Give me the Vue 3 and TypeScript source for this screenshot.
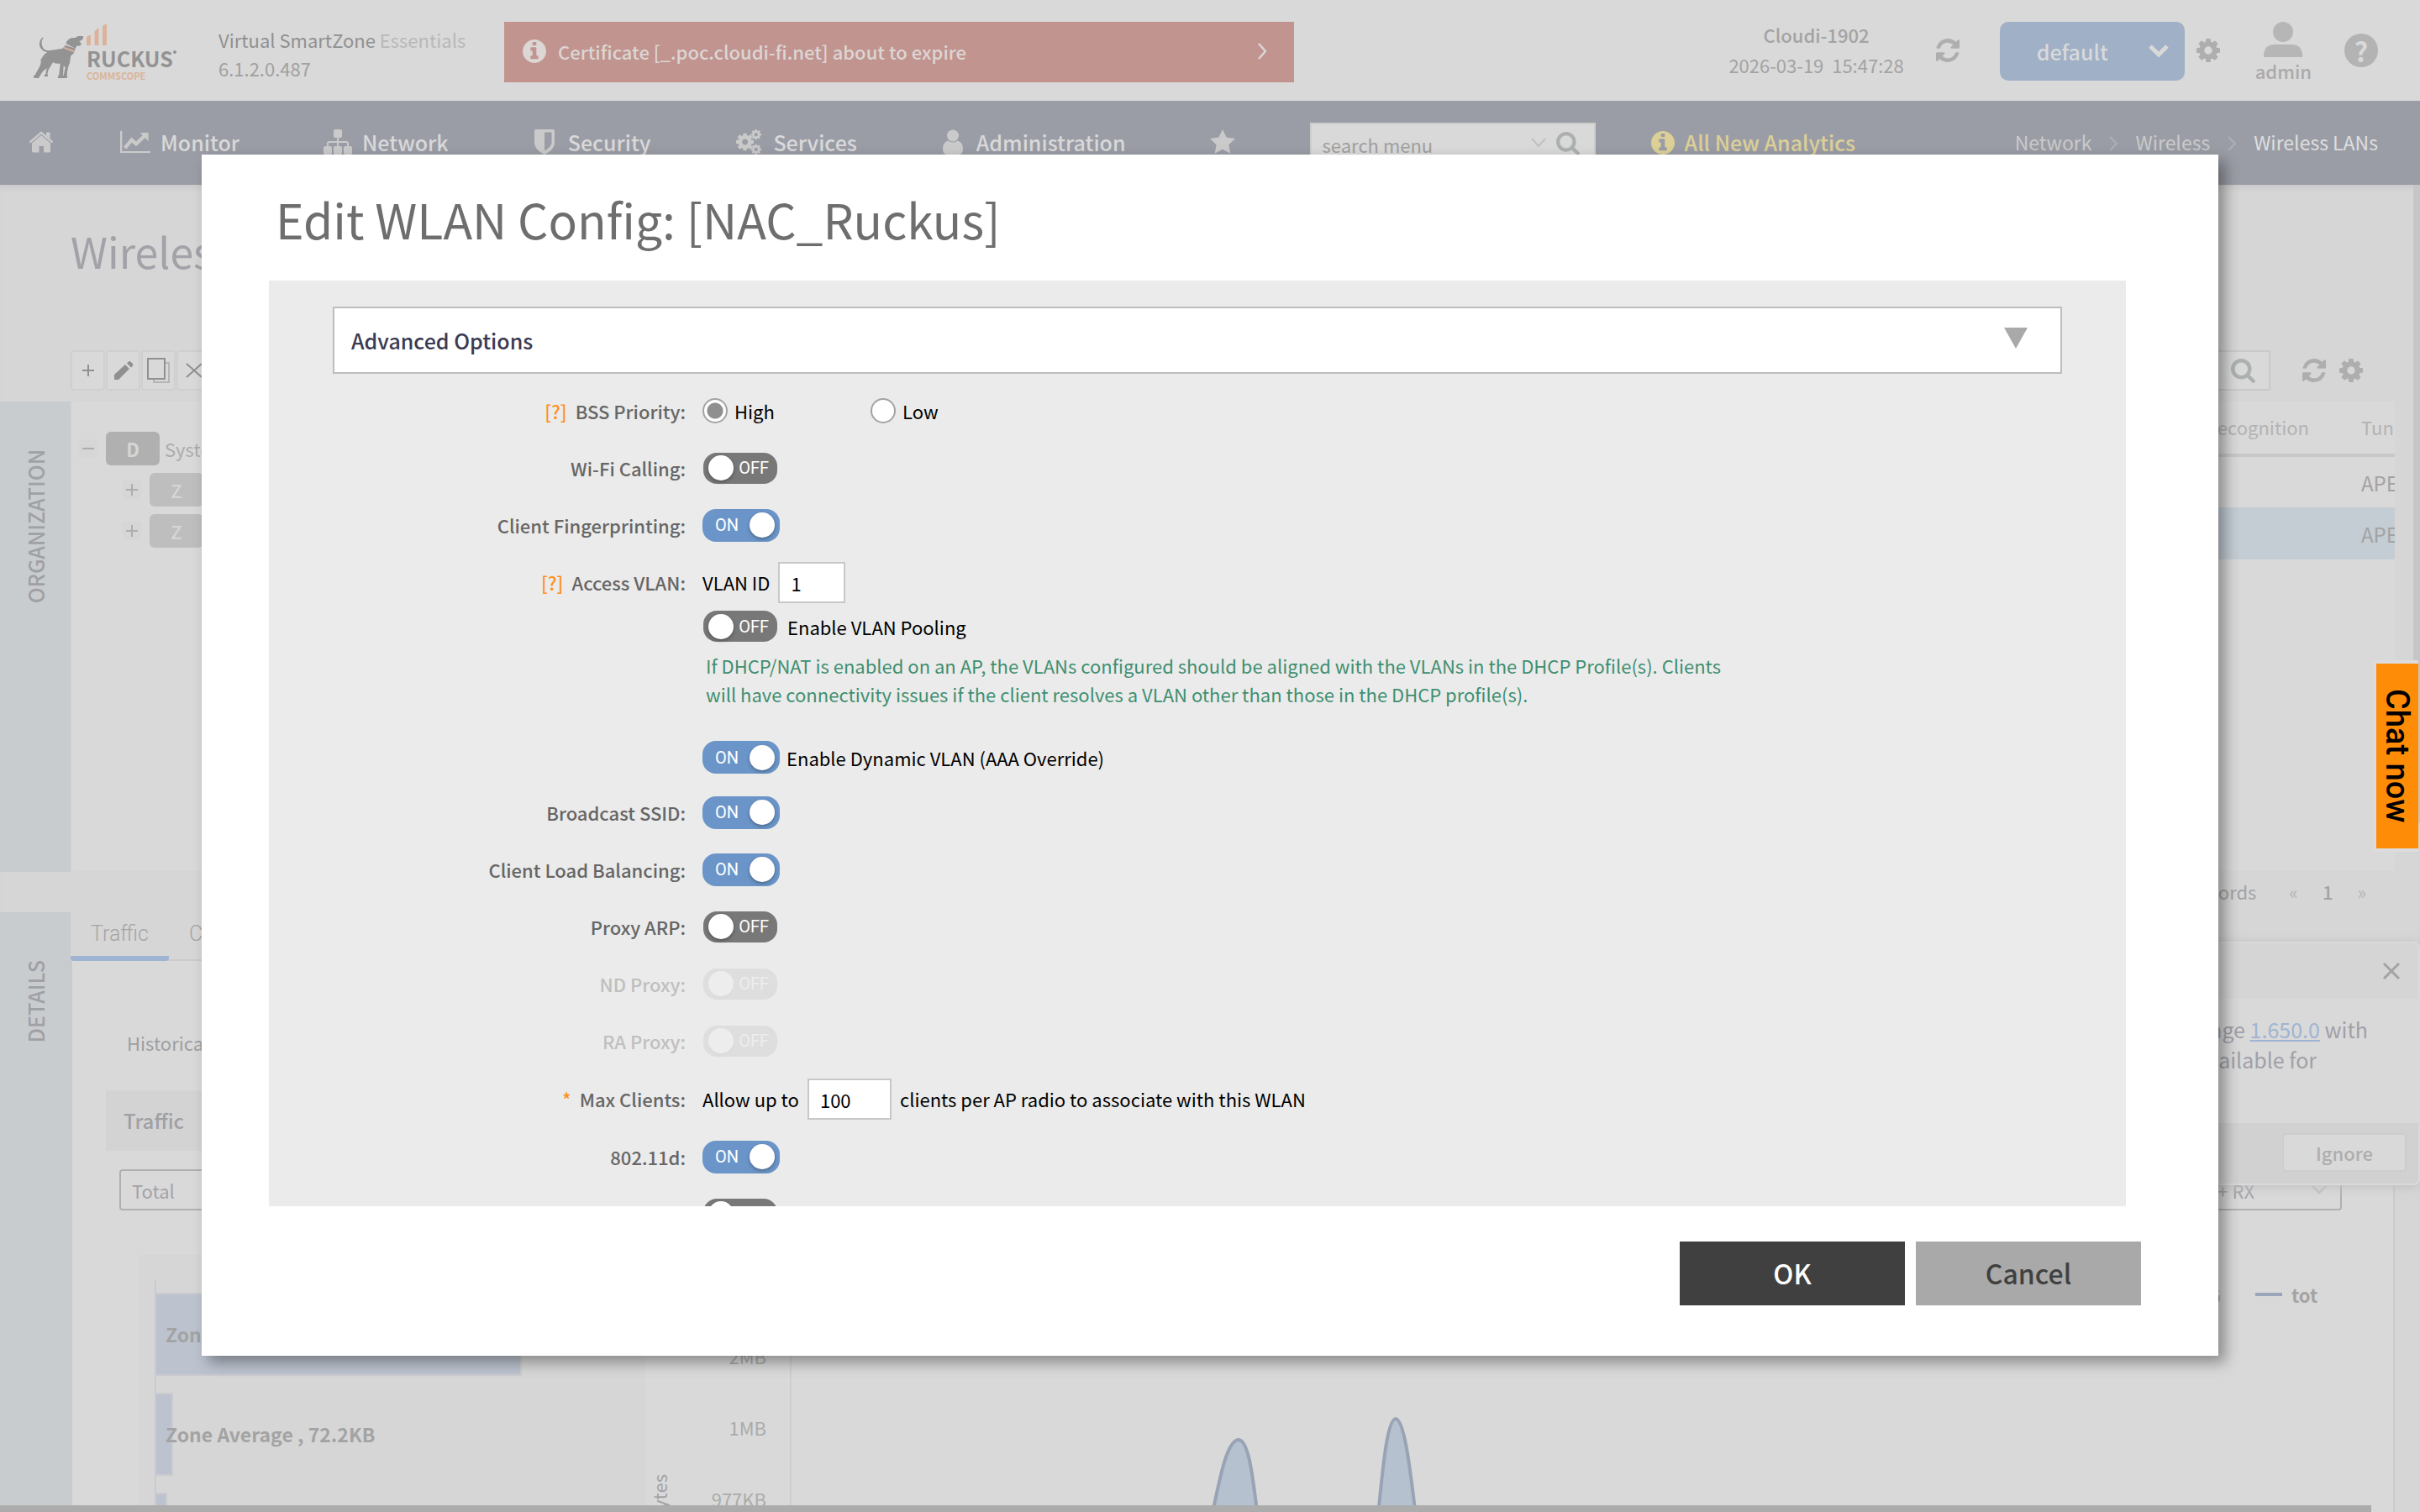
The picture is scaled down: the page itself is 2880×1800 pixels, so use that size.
<script setup lang="ts">
import { ref } from 'vue'

interface NavItem {
  label: string
  icon: string
  width: number
  box: string
}

const navItems: NavItem[] = [
  { label: 'Monitor', icon: 'i-chart', width: 36, box: '0 0 38 28' },
  { label: 'Network', icon: 'i-sitemap', width: 34, box: '0 0 34 30' },
  { label: 'Security', icon: 'i-shield', width: 30, box: '0 0 28 30' },
  { label: 'Services', icon: 'i-cogs', width: 34, box: '0 0 34 34' },
  { label: 'Administration', icon: 'i-person', width: 30, box: '0 0 28 30' },
]

const bssPriority = ref('high')
const vlanId = ref('1')
const maxClients = ref('100')

interface ToggleRow {
  id: string
  label: string
  on: boolean
  disabled?: boolean
}

const firstRows = ref<ToggleRow[]>([
  { id: 'wifi-calling', label: 'Wi-Fi Calling:', on: false },
  { id: 'fingerprint', label: 'Client Fingerprinting:', on: true },
])
const pooling = ref<ToggleRow>({ id: 'pooling', label: 'Enable VLAN Pooling', on: false })
const dynamicVlan = ref<ToggleRow>({ id: 'dynamic', label: 'Enable Dynamic VLAN (AAA Override)', on: true })
const middleRows = ref<ToggleRow[]>([
  { id: 'broadcast', label: 'Broadcast SSID:', on: true },
  { id: 'balancing', label: 'Client Load Balancing:', on: true },
  { id: 'proxy-arp', label: 'Proxy ARP:', on: false },
  { id: 'nd-proxy', label: 'ND Proxy:', on: false, disabled: true },
  { id: 'ra-proxy', label: 'RA Proxy:', on: false, disabled: true },
])
const lastRows = ref<ToggleRow[]>([
  { id: 'dot11d', label: '802.11d:', on: true },
  { id: 'dot11k', label: '', on: false },
])

const bars = [
  { label: 'Zone', width: 435 },
  { label: 'Zone Average , 72.2KB', width: 20 },
  { label: '', width: 12 },
]
const ticks = ['2MB', '1MB', '977KB']
</script>

<template>
  <div class="app">
    <svg class="defs" width="0" height="0" aria-hidden="true">
      <symbol id="i-info" viewBox="0 128 1536 1536"><path d="M1024 1376v-160q0-14-9-23t-23-9h-96v-512q0-14-9-23t-23-9h-320q-14 0-23 9t-9 23v160q0 14 9 23t23 9h96v320h-96q-14 0-23 9t-9 23v160q0 14 9 23t23 9h448q14 0 23-9t9-23zm-128-896v-160q0-14-9-23t-23-9h-192q-14 0-23 9t-9 23v160q0 14 9 23t23 9h192q14 0 23-9t9-23zm640 416q0 209-103 385.500t-279.500 279.500-385.500 103-385.500-103-279.500-279.500-103-385.500 103-385.500 279.500-279.500 385.500-103 385.500 103 279.500 279.500 103 385.500z" /></symbol>
      <symbol id="i-cog" viewBox="0 128 1536 1536"><path d="M1024 896q0-106-75-181t-181-75-181 75-75 181 75 181 181 75 181-75 75-181zm512-109v222q0 12-8 23t-20 13l-185 28q-19 54-39 91 35 50 107 138 10 12 10 25t-9 23q-27 37-99 108t-94 71q-12 0-26-9l-138-108q-44 23-91 38-16 136-29 186-7 28-36 28h-222q-14 0-24.500-8.500t-11.500-21.500l-28-184q-49-16-90-37l-141 107q-10 9-25 9-14 0-25-11-126-114-165-168-7-10-7-23 0-12 8-23 15-21 51-66.500t54-70.500q-27-50-41-99l-183-27q-13-2-21-12.500t-8-23.500v-222q0-12 8-23t19-13l186-28q14-46 39-92-40-57-107-138-10-12-10-24 0-10 9-23 26-36 98.500-107.500t94.500-71.500q13 0 26 10l138 107q44-23 91-38 16-136 29-186 7-28 36-28h222q14 0 24.500 8.500t11.500 21.500l28 184q49 16 90 37l142-107q9-9 24-9 13 0 25 10 129 119 165 170 7 8 7 22 0 12-8 23-15 21-51 66.500t-54 70.500q26 50 41 98l183 28q13 2 21 12.500t8 23.500z" /></symbol>
      <symbol id="i-refresh" viewBox="0 128 1536 1536"><path d="M1511 1056q0 5-1 7-64 268-268 434.500t-478 166.500q-146 0-282.500-55t-243.500-157l-129 129q-19 19-45 19t-45-19-19-45v-448q0-26 19-45t45-19h448q26 0 45 19t19 45-19 45l-137 137q71 66 161 102t187 36q134 0 250-65t186-179q11-17 53-117 8-23 30-23h192q13 0 22.500 9.500t9.500 22.500zm25-800v448q0 26-19 45t-45 19h-448q-26 0-45-19t-19-45 19-45l138-138q-148-137-349-137-134 0-250 65t-186 179q-11 17-53 117-8 23-30 23h-199q-13 0-22.500-9.500t-9.500-22.500v-7q65-268 270-434.500t480-166.500q146 0 284 55.500t245 156.500l130-129q19-19 45-19t45 19 19 45z" /></symbol>
      <symbol id="i-search" viewBox="0 128 1664 1664"><path d="M1152 832q0-185-131.500-316.500t-316.500-131.500-316.500 131.500-131.500 316.500 131.500 316.500 316.500 131.500 316.500-131.500 131.500-316.500zm512 832q0 52-38 90t-90 38q-54 0-90-38l-343-342q-179 124-399 124-143 0-273.500-55.500t-225-150-150-225-55.500-273.500 55.500-273.500 150-225 225-150 273.500-55.500 273.500 55.500 225 150 150 225 55.500 273.500q0 220-124 399l343 343q37 37 37 90z" /></symbol>
      <symbol id="i-home" viewBox="0 0 30 26"><path d="M15 5 L26 14.500 V24 a1.500 1.500 0 0 1-1.500 1.500 H18 V18 H12.500 V25.500 H5.500 A1.500 1.500 0 0 1 4 24 V14.500 Z" /><path d="M1.500 13.500 L15 2 L28.500 13.500" fill="none" stroke="currentColor" stroke-width="2.600" /><path d="M21 1.500h4.500v8l-4.500-4z" /></symbol>
      <symbol id="i-chart" viewBox="0 0 38 28"><path d="M0 0h2.500v25.500H38V28H0z" /><path d="M6 21.500 L14.500 11.500 L20 16.500 L31 6" fill="none" stroke="currentColor" stroke-width="4.500" /><path d="M25 2.500h10.500V13z" /></symbol>
      <symbol id="i-sitemap" viewBox="0 0 34 30"><rect x="12" y="0" width="10" height="10" rx="2" /><rect x="0" y="20" width="10" height="10" rx="2" /><rect x="12" y="20" width="10" height="10" rx="2" /><rect x="24" y="20" width="10" height="10" rx="2" /><path d="M17 9v12M5 21v-4.500q0-1.500 1.500-1.500h21q1.500 0 1.500 1.500V21" fill="none" stroke="currentColor" stroke-width="2" /></symbol>
      <symbol id="i-shield" viewBox="0 0 28 30"><path fill-rule="evenodd" d="M3 0h20q2 0 2 2v14q0 8-12 14Q1 24 1 16V2q0-2 2-2zM13 3.500v22q8.500-5 8.500-10V3.500z" /></symbol>
      <symbol id="i-cogs" viewBox="0 0 34 34"><use href="#i-cog" x="0" y="5" width="24" height="24" /><use href="#i-cog" x="20" y="0" width="14" height="14" /><use href="#i-cog" x="20" y="20" width="14" height="14" /></symbol>
      <symbol id="i-person" viewBox="0 0 28 30"><circle cx="13" cy="7.500" r="7" /><path d="M7 13.500q6 4 12 0q6 2 6 10q0 6.500-5 6.500H6q-5 0-5-6.500q0-8 6-10z" /></symbol>
      <symbol id="i-star" viewBox="0 0 30 29"><path d="M15 0l4.600 9.600 10.400 1.400-7.600 7.300 1.900 10.500L15 23.700 5.700 28.800l1.900-10.500L0 11l10.400-1.400z" /></symbol>
    </svg>

    <header class="topbar">
      <div class="logo">
        <svg class="dog" viewBox="0 0 180 150" width="60" height="50" aria-hidden="true">
          <path fill="#939393" d="M2 147q0-6 6-8l14-26q10-14 6-28l12-18q6-6 12-9Q28 52 24 32q-2-16 12-28l2 2Q28 18 34 36q4 14 22 16l42-6q12-2 18-14l36 12q-2 16-16 26l-4 26q-8 16-10 44q4 6-2 10h-14q-2-6 4-10l6-28-6-6-2 34q2 8-3 10H90q-2-6 4-12l4-40q-16 2-26-4l-16 26-4 16q4 4 2 8H40q0-6 6-8l4-22-16 14-12 20q2 4 0 8z" />
          <path fill="#939393" d="M120 28q-2-8 4-12q8-12 28-10q8-6 18-8l8 0q6 2 2 10q-4 8-14 10q6 4 8 12q-8 8-16 4l-6 10z" />
          <path fill="#dcb39a" d="M110 38l40 14-2 6-42-16z" />
        </svg>
        <div class="brand">
          <svg viewBox="0 0 24 26" width="24" height="26" aria-hidden="true"><path fill="#dcb39a" d="M0 16l5-3v13H0zM9.500 9l5-4v21h-5zM19 3l5-3v26h-5z" /></svg>
          <strong>RUCKUS<i></i></strong>
          <small>COMMSCOPE</small>
        </div>
      </div>
      <div class="product">
        <div>Virtual SmartZone <span>Essentials</span></div>
        <div class="version">6.1.2.0.487</div>
      </div>
      <div class="alert">
        <svg class="ic28"><use href="#i-info" /></svg>
        <span>Certificate [_.poc.cloudi-fi.net] about to expire</span>
        <svg class="alert-more" viewBox="0 0 12 20" width="12" height="20"><path d="M2 1l8 9-8 9" fill="none" stroke="currentColor" stroke-width="2.500" /></svg>
      </div>
      <div class="cluster">
        <div class="name">Cloudi-1902</div>
        <div>2026-03-19&nbsp; 15:47:28</div>
      </div>
      <button class="bare refresh" aria-label="Refresh"><svg class="ic28"><use href="#i-refresh" /></svg></button>
      <button class="domain">
        default
        <svg viewBox="0 0 26 18" width="26" height="18"><path d="M3 3l10 10L23 3" fill="none" stroke="currentColor" stroke-width="5" /></svg>
      </button>
      <button class="bare gear" aria-label="Settings"><svg class="ic28"><use href="#i-cog" /></svg></button>
      <div class="user">
        <svg viewBox="0 0 46 42" width="46" height="42"><circle cx="23" cy="12" r="12" fill="#b6b6b6" /><path d="M0 42V38Q2 27 12 27h22q10 0 12 11v4z" fill="#b6b6b6" /></svg>
        <span>admin</span>
      </div>
      <button class="bare help" aria-label="Help"><span>?</span></button>
    </header>

    <nav class="nav">
      <a href="#" class="home" aria-label="Home"><svg viewBox="0 0 30 26" width="30" height="26"><use href="#i-home" /></svg></a>
      <a v-for="item in navItems" :key="item.label" href="#" class="nav-item">
        <svg :viewBox="item.box" :width="item.width" height="30"><use :href="'#' + item.icon" /></svg>
        {{ item.label }}
      </a>
      <a href="#" class="star" aria-label="Favorites"><svg width="30" height="29"><use href="#i-star" /></svg></a>
      <div class="menu-search">
        <input type="text" placeholder="search menu" aria-label="search menu" />
        <svg viewBox="0 0 18 12" width="18" height="12"><path d="M1 1l8 9 8-9" fill="none" stroke="#c0c0c0" stroke-width="2" /></svg>
        <svg class="ic28 glass"><use href="#i-search" /></svg>
      </div>
      <a href="#" class="analytics"><svg class="ic28"><use href="#i-info" /></svg>All New Analytics</a>
      <div class="crumbs">
        <a href="#">Network</a>
        <svg viewBox="0 0 12 20" width="12" height="20"><path d="M2 2l8 8-8 8" fill="none" stroke="#adafb6" stroke-width="2" /></svg>
        <a href="#">Wireless</a>
        <svg viewBox="0 0 12 20" width="12" height="20"><path d="M2 2l8 8-8 8" fill="none" stroke="#adafb6" stroke-width="2" /></svg>
        <span>Wireless LANs</span>
      </div>
    </nav>

    <main class="page">
      <h1>Wireless</h1>
      <div class="toolbar">
        <button aria-label="Add"><svg viewBox="0 0 16 16" width="16" height="16"><path d="M8 1v14M1 8h14" stroke="currentColor" stroke-width="2" /></svg></button>
        <button aria-label="Edit"><svg viewBox="0 0 24 24" width="24" height="24"><path d="M1 23v-6L14 5l5 5L6 23zM16 3.500l2-2q1.500-1 3 .5l1.500 1.500q1.500 1.500.5 3l-2 2z" fill="currentColor" /></svg></button>
        <button aria-label="Clone"><svg viewBox="0 0 28 30" width="28" height="30"><path d="M8 26v3h18V6h-4" fill="none" stroke="#b5b5b5" stroke-width="2" /><path d="M1 1h20v24H1z" fill="none" stroke="currentColor" stroke-width="2" /></svg></button>
        <button aria-label="Delete"><svg viewBox="0 0 20 20" width="20" height="20"><path d="M1 2l18 16M19 2L1 18" stroke="currentColor" stroke-width="2" /></svg></button>
        <div class="toolbar-right">
          <div class="table-search"><input type="text" aria-label="search table" /><svg width="29" height="29" class="glass"><use href="#i-search" /></svg></div>
          <button class="bare" aria-label="Reload table"><svg class="ic28"><use href="#i-refresh" /></svg></button>
          <button class="bare" aria-label="Table settings"><svg class="ic28"><use href="#i-cog" /></svg></button>
        </div>
      </div>

      <section class="org">
        <div class="side"><span>ORGANIZATION</span></div>
        <div class="tree">
          <div class="node">
            <button class="expander" aria-label="Collapse"><svg viewBox="0 0 16 16" width="16" height="16"><path d="M1 8h14" stroke="currentColor" stroke-width="2" /></svg></button>
            <b class="pill dark">D</b>System
          </div>
          <div v-for="n in 2" :key="n" class="node child">
            <button class="expander" aria-label="Expand"><svg viewBox="0 0 16 16" width="16" height="16"><path d="M8 1v14M1 8h14" stroke="currentColor" stroke-width="2" /></svg></button>
            <b class="pill">Z</b>
          </div>
        </div>
        <div class="wlans">
          <table>
            <thead>
              <tr><th class="recog">Application Recognition</th><th class="tun">Tun</th></tr>
            </thead>
            <tbody>
              <tr><td></td><td class="tun">APE</td></tr>
              <tr class="selected"><td></td><td class="tun">APE</td></tr>
            </tbody>
          </table>
        </div>
      </section>
      <div class="pager">
        <span>2 records</span>
        <button class="bare" aria-label="Previous">«</button>
        <b>1</b>
        <button class="bare" aria-label="Next">»</button>
      </div>

      <section class="details">
        <div class="side"><span>DETAILS</span></div>
        <div class="detail-body">
          <div class="tabs">
            <button class="tab active">Traffic</button>
            <button class="tab">Configuration</button>
          </div>
          <div class="panel">
            <p class="historical">Historical Data</p>
            <h2>Traffic</h2>
            <div class="selects">
              <label class="select wide"><select aria-label="Metric"><option>Total</option></select></label>
              <label class="select"><select class="right" aria-label="Direction"><option>TX + RX</option></select>
                <svg viewBox="0 0 18 12" width="18" height="12"><path d="M1 1l8 8 8-8" fill="none" stroke="#c0c0c0" stroke-width="2" /></svg>
              </label>
            </div>
            <div class="charts">
              <div class="bars">
                <div class="bars-inner">
                  <div v-for="bar in bars" :key="bar.label" class="bar-row">
                    <div class="bar" :style="{ width: bar.width + 'px' }"><span>{{ bar.label }}</span></div>
                  </div>
                </div>
              </div>
              <div class="axis-name"><span>Bytes</span></div>
              <div class="ticks"><span v-for="t in ticks" :key="t">{{ t }}</span></div>
              <div class="plot">
                <svg viewBox="0 0 900 320" width="900" height="320" aria-hidden="true">
                  <g fill="#b5c1cf" stroke="#98a3b5" stroke-width="4">
                    <path d="M498 320C508 278 516 221 532 220C546 221 550 278 556 320" />
                    <path d="M697 320C703 262 708 196 719 195C730 196 737 262 744 320" />
                  </g>
                </svg>
                <div class="legend"><span class="legend-name">5G</span><i></i><span class="legend-total">total</span></div>
              </div>
            </div>
          </div>
        </div>
      </section>
      <div class="vscroll"></div>
      <div class="hscroll"></div>

      <aside class="popup">
        <div class="popup-head"><button class="bare" aria-label="Close"><svg viewBox="0 0 20 20" width="20" height="20"><path d="M1 1l18 18M19 1L1 19" stroke="currentColor" stroke-width="3" /></svg></button></div>
        <div class="popup-body">
          <div>Signature package <a href="#">1.650.0</a> with</div>
          <div class="second">is available for</div>
        </div>
        <div class="popup-foot"><button>Ignore</button></div>
      </aside>
    </main>

    <button class="chat">Chat now</button>

    <div class="overlay">
      <form class="modal" role="dialog" aria-labelledby="modal-title" @submit.prevent>
        <h2 id="modal-title">Edit WLAN Config: [NAC_Ruckus]</h2>
        <div class="scroll">
          <button type="button" class="section-head">
            Advanced Options
            <svg viewBox="0 0 28 25" width="28" height="25"><path d="M0 0h28L14 25z" fill="#a9a9a9" /></svg>
          </button>

          <div class="row">
            <span class="label"><i>[?]</i>BSS Priority:</span>
            <div class="field">
              <label class="radio"><input v-model="bssPriority" type="radio" name="bss" value="high" />High</label>
              <label class="radio"><input v-model="bssPriority" type="radio" name="bss" value="low" />Low</label>
            </div>
          </div>

          <div v-for="r in firstRows" :key="r.id" class="row">
            <label class="label" :for="r.id">{{ r.label }}</label>
            <div class="field">
              <span class="switch" :class="{ on: r.on }"><input :id="r.id" v-model="r.on" type="checkbox" /><span>{{ r.on ? 'ON' : 'OFF' }}</span><i></i></span>
            </div>
          </div>

          <div class="row">
            <span class="label"><i>[?]</i>Access VLAN:</span>
            <div class="field">
              <label for="vlan">VLAN ID</label>
              <input id="vlan" v-model="vlanId" type="text" class="text short" />
            </div>
          </div>
          <div class="sub">
            <div class="field">
              <span class="switch" :class="{ on: pooling.on }"><input :id="pooling.id" v-model="pooling.on" type="checkbox" /><span>{{ pooling.on ? 'ON' : 'OFF' }}</span><i></i></span>
              <label class="after" :for="pooling.id">{{ pooling.label }}</label>
            </div>
            <p class="note">If DHCP/NAT is enabled on an AP, the VLANs configured should be aligned with the VLANs in the DHCP Profile(s). Clients<br />will have connectivity issues if the client resolves a VLAN other than those in the DHCP profile(s).</p>
            <div class="field">
              <span class="switch" :class="{ on: dynamicVlan.on }"><input :id="dynamicVlan.id" v-model="dynamicVlan.on" type="checkbox" /><span>{{ dynamicVlan.on ? 'ON' : 'OFF' }}</span><i></i></span>
              <label class="after" :for="dynamicVlan.id">{{ dynamicVlan.label }}</label>
            </div>
          </div>

          <div v-for="r in middleRows" :key="r.id" class="row" :class="{ disabled: r.disabled }">
            <label class="label" :for="r.id">{{ r.label }}</label>
            <div class="field">
              <span class="switch" :class="{ on: r.on }"><input :id="r.id" v-model="r.on" type="checkbox" :disabled="r.disabled" /><span>{{ r.on ? 'ON' : 'OFF' }}</span><i></i></span>
            </div>
          </div>

          <div class="row tall">
            <label class="label" for="max"><i>*</i>Max Clients:</label>
            <div class="field">
              <span>Allow up to</span>
              <input id="max" v-model="maxClients" type="text" class="text" />
              <span>clients per AP radio to associate with this WLAN</span>
            </div>
          </div>

          <div v-for="r in lastRows" :key="r.id" class="row">
            <label class="label" :for="r.id">{{ r.label }}</label>
            <div class="field">
              <span class="switch" :class="{ on: r.on }"><input :id="r.id" v-model="r.on" type="checkbox" /><span>{{ r.on ? 'ON' : 'OFF' }}</span><i></i></span>
            </div>
          </div>
        </div>
        <div class="actions">
          <button type="submit" class="ok">OK</button>
          <button type="button" class="cancel">Cancel</button>
        </div>
      </form>
    </div>
  </div>
</template>

<style>
body {
  margin: 0;
  overflow: hidden;
}
</style>

<style scoped>
.app {
  position: relative;
  display: flex;
  flex-direction: column;
  height: 100vh;
  overflow: hidden;
  background: #d6d6d6;
  color: #a3a3a3;
  font-family: "Noto Sans CJK SC", "Noto Sans", sans-serif;
  font-size: 22px;
  line-height: 32px;
}
.app * {
  box-sizing: border-box;
}
.defs {
  position: absolute;
}
svg {
  display: block;
  flex: none;
  fill: currentColor;
}
button,
input,
select {
  margin: 0;
  font: inherit;
  color: inherit;
}
button {
  display: flex;
  align-items: center;
  justify-content: center;
  padding: 0;
  cursor: pointer;
}
a {
  color: inherit;
  text-decoration: none;
}
.bare {
  border: 0;
  background: none;
}
.ic28 {
  width: 28px;
  height: 28px;
}

/* top bar */
.topbar {
  display: flex;
  flex: none;
  height: 120px;
  padding: 26px 50px 0 39px;
  background: #d9d9d9;
  white-space: nowrap;
}
.logo {
  display: flex;
  align-items: flex-start;
  width: 221px;
}
.dog {
  margin: 17px 4px 0 0;
}
.brand {
  padding-top: 2px;
  color: #939393;
}
.brand strong {
  display: block;
  font-size: 25px;
  line-height: 30px;
}
.brand strong i {
  display: inline-block;
  width: 4px;
  height: 4px;
  border-radius: 2px;
  background: #939393;
  vertical-align: 16px;
}
.brand small {
  display: block;
  font-size: 11px;
  font-weight: 700;
  line-height: 12px;
  color: #dcb39a;
}
.product {
  width: 340px;
  padding-top: 4px;
  color: #909090;
  line-height: 34px;
}
.product span {
  color: #b8b8b8;
}
.product .version {
  color: #a0a0a0;
}
.alert {
  display: flex;
  flex: none;
  align-items: center;
  gap: 14px;
  width: 940px;
  height: 72px;
  padding: 0 32px 2px 22px;
  background: #c1948f;
  color: #dcd6d5;
  font-weight: 500;
}
.alert-more {
  margin-left: auto;
}
.cluster {
  margin-top: -3px;
  margin-left: auto;
  text-align: center;
  line-height: 36px;
}
.cluster .name {
  font-weight: 500;
}
.refresh {
  height: 67px;
  margin-left: 38px;
  color: #aeaeae;
}
.domain {
  width: 220px;
  height: 70px;
  margin-left: 48px;
  padding: 0 18px 0 44px;
  justify-content: space-between;
  border: 0;
  border-radius: 10px;
  background: #9fb0c7;
  color: #d9d9d9;
  font-size: 25px;
  font-weight: 500;
}
.gear {
  height: 67px;
  margin-left: 14px;
  color: #aeaeae;
}
.user {
  display: flex;
  flex-direction: column;
  align-items: center;
  margin-left: 42px;
  font-weight: 500;
  color: #aaa;
}
.help {
  width: 40px;
  height: 40px;
  margin: 14px 0 0 39px;
  border-radius: 50%;
  background: #b3b3b3;
  color: #d9d9d9;
  font-size: 32px;
  font-weight: 700;
}

/* navigation */
.nav {
  display: flex;
  flex: none;
  align-items: flex-start;
  height: 100px;
  padding: 26px 50px 0 34px;
  background: #9b9da6;
  color: #cacaca;
  white-space: nowrap;
}
.nav svg {
  margin-top: 10px;
}
.home {
  margin-right: 79px;
}
.nav-item {
  display: flex;
  gap: 12px;
  margin-right: 100px;
  font-size: 25px;
  font-weight: 500;
  line-height: 46px;
  color: #d9d9d9;
}
.nav-item svg {
  margin-top: 4px;
  margin-top: 8px;
  color: #cacaca;
}
.star svg {
  margin-top: 8px;
}
.menu-search {
  display: flex;
  width: 340px;
  height: 50px;
  margin: 0 66px 0 89px;
  border: 2px solid #cdcdcd;
  background: #d9d9d9;
}
.menu-search input {
  width: 261px;
  padding: 1px 13px 0;
  border: 0;
  background: none;
}
.menu-search input::placeholder {
  color: #a0a0a0;
}
.menu-search svg {
  margin-top: 16px;
}
.menu-search svg.glass {
  margin: 9px 0 0 12px;
}
.glass {
  color: #acb0b0;
}
.analytics {
  display: flex;
  gap: 12px;
  font-size: 25px;
  font-weight: 500;
  line-height: 46px;
  color: #ddd097;
}
.crumbs {
  display: flex;
  gap: 20px;
  margin-left: auto;
  font-size: 23px;
  line-height: 46px;
}
.crumbs svg {
  margin-top: 15px;
}
.crumbs span {
  color: #dedede;
}

/* page */
.page {
  display: flex;
  flex: 1;
  flex-direction: column;
  min-height: 0;
  padding-top: 40px;
  box-shadow: inset 0 8px 8px -6px #c4c4c4;
}
h1 {
  margin: 0 0 81px 84px;
  font-size: 50px;
  font-weight: 400;
  line-height: 76px;
  color: #a2a2a8;
}
.toolbar {
  display: flex;
  flex: none;
  gap: 1px;
  height: 48px;
  margin: 0 68px 13px 84px;
  color: #909090;
}
.toolbar > button {
  width: 41px;
  border: 2px solid #cfcfcf;
  border-radius: 4px;
  background: #d9d9d9;
}
.toolbar-right {
  display: flex;
  align-items: center;
  margin-left: auto;
  color: #aeaeae;
}
.toolbar-right .bare {
  margin-left: 16px;
}
.table-search {
  display: flex;
  align-items: center;
  height: 48px;
  margin-right: 22px;
  padding-right: 16px;
  border: 2px solid #c9c9c9;
  background: #d9d9d9;
}
.table-search input {
  border: 0;
  background: none;
}
.side {
  flex: none;
  width: 84px;
  padding: 57px 26px 0 0;
  background: #c8cccf;
  color: #a0a0a5;
  font-size: 25px;
  font-weight: 500;
}
.side span {
  margin-left: 26px;
  writing-mode: vertical-rl;
  transform: rotate(180deg);
}
.org {
  display: flex;
  flex: none;
  height: 560px;
}
.tree {
  width: 30%;
  margin: 0 0 2px 2px;
  padding: 36px 8px;
  background: #d9d9d9;
}
.node {
  display: flex;
  align-items: center;
  height: 40px;
  margin-bottom: 9px;
  color: #adadad;
}
.node.child {
  padding-left: 52px;
}
.expander {
  width: 22px;
  height: 22px;
  margin-right: 10px;
  border: 0;
  background: #d6d6d6;
}
.pill {
  width: 64px;
  margin-right: 6px;
  border-radius: 6px;
  background: #bebebe;
  color: #d6d6d6;
  line-height: 40px;
  text-align: center;
  font-weight: 500;
}
.pill.dark {
  background: #b0b0b0;
  font-weight: 700;
}
.wlans {
  flex: 1;
  margin: 0 30px 2px 8px;
  background: #d9d9d9;
}
.wlans table {
  width: 100%;
  border-collapse: collapse;
  table-layout: fixed;
}
.wlans th {
  height: 64px;
  padding: 0 0 2px;
  border-bottom: 4px solid #c8c8c8;
  font-weight: 400;
  text-align: left;
  color: #b3b3b3;
}
.wlans td {
  height: 62px;
  padding: 2px 0 0;
  font-size: 24px;
}
.wlans .recog {
  padding-right: 62px;
  text-align: right;
}
.wlans .tun {
  width: 40px;
  overflow: hidden;
  white-space: nowrap;
}
.selected {
  background: #c4cdd4;
}
.pager {
  display: flex;
  flex: none;
  align-items: center;
  justify-content: flex-end;
  gap: 29px;
  height: 48px;
  padding: 0 64px 2px 0;
}
.pager span {
  margin-right: 10px;
}
.pager b {
  font-weight: 500;
}
.pager button {
  color: #b5b5b5;
}
.details {
  display: flex;
  flex: 1;
  min-height: 0;
}
.detail-body {
  flex: 1;
  margin-right: 30px;
}
.tabs {
  display: flex;
  height: 58px;
  border-bottom: 2px solid #cbcbcb;
}
.tab {
  height: 58px;
  padding: 0 24px;
  border: 0;
  border-bottom: 6px solid transparent;
  background: none;
  color: #a5a5a5;
  font-family: Roboto, sans-serif;
  font-weight: 300;
  font-size: 25px;
}
.tab.active {
  border-bottom-color: #9fb4d2;
  border-radius: 0 0 4px 4px;
}
.panel {
  height: 100%;
  padding: 81px 0 0 40px;
  border: solid #cacaca;
  border-width: 0 2px;
  background: #d9d9d9;
}
.historical {
  margin: 0 0 41px 25px;
  color: #9c9fa2;
}
.panel h2 {
  margin: 0 40px 22px 0;
  padding-left: 21px;
  background: #d3d3d3;
  color: #a0a0a5;
  font-size: 24px;
  font-weight: 500;
  line-height: 72px;
}
.selects {
  display: flex;
  justify-content: space-between;
  margin: 0 61px 53px 16px;
}
.select {
  position: relative;
  display: flex;
  align-items: center;
  width: 400px;
  height: 49px;
  padding: 0 16px 0 13px;
  border: 2px solid #b0b0b0;
  border-radius: 4px;
  color: #a3a3a8;
}
.select select {
  flex: 1;
  border: 0;
  background: none;
  appearance: none;
}
.select select.right {
  margin-right: 68px;
  text-align: right;
  text-align-last: right;
}
.charts {
  display: flex;
  height: 320px;
  padding-left: 40px;
}
.bars {
  flex: none;
  width: 602px;
  padding: 30px 0 0 18px;
  background: #d6d6d6;
}
.bars-inner {
  height: 100%;
  padding-top: 15px;
  border-left: 2px solid #c8cccf;
}
.bar-row {
  height: 99px;
  margin-bottom: 20px;
}
.bar {
  height: 99px;
  padding-left: 11px;
  border: solid #cbcbcf;
  border-width: 2px 2px 2px 0;
  background: #bcc3cf;
  color: #a3a3a3;
  font-size: 23px;
  font-weight: 700;
  line-height: 95px;
  white-space: nowrap;
}
.axis-name {
  width: 40px;
  padding-top: 261px;
}
.axis-name span {
  writing-mode: vertical-rl;
  transform: rotate(180deg);
}
.ticks {
  display: flex;
  flex-direction: column;
  align-items: flex-end;
  gap: 53px;
  width: 104px;
  padding-top: 104px;
  color: #ababab;
}
.plot {
  display: flex;
  flex: 1;
  min-width: 0;
  margin-left: 28px;
  border-left: 2px solid #cecece;
}
.legend {
  display: flex;
  align-items: center;
  height: 32px;
  margin: 31px 90px 0 auto;
  font-weight: 500;
  white-space: nowrap;
}
.legend i {
  width: 32px;
  height: 4px;
  margin: 0 11px 0 41px;
  background: #9aa5ba;
}
.legend-total {
  width: 31px;
  overflow: hidden;
  font-weight: 700;
}
.vscroll {
  position: absolute;
  top: 220px;
  right: 0;
  width: 8px;
  height: 760px;
  background: #c6c6c6;
}
.hscroll {
  position: absolute;
  bottom: 0;
  left: 0;
  width: 98%;
  height: 8px;
  background: #acacac;
}
.popup {
  position: absolute;
  top: 1121px;
  right: 0;
  width: 600px;
  border: 2px solid #dadada;
  border-radius: 8px;
  background: #d9d9d9;
  box-shadow: 0 2px 14px #bfbfbf;
  color: #a0a0a8;
  font-size: 24px;
  overflow: hidden;
}
.popup-head {
  display: flex;
  justify-content: flex-end;
  height: 66px;
  padding: 0 22px 0 0;
  background: #d5d5d5;
  color: #a3a3a3;
}
.popup-body {
  height: 148px;
  padding: 18px 60px 0 0;
  font-size: 25px;
  line-height: 36px;
  text-align: right;
}
.popup-body a {
  color: #9fb4d2;
  text-decoration: underline;
}
.popup-body .second {
  padding-right: 61px;
}
.popup-foot {
  display: flex;
  justify-content: flex-end;
  padding: 12px 14px 14px;
  background: #d1d1d1;
}
.popup-foot button {
  width: 148px;
  height: 46px;
  border: 2px solid #cdcdcd;
  border-radius: 4px;
  background: #d9d9d9;
  color: #adadad;
  font-size: 22px;
  font-weight: 500;
}
.chat {
  position: absolute;
  top: 786px;
  right: 2px;
  z-index: 3;
  width: 54px;
  height: 228px;
  border: 4px solid #dcdcdc;
  border-right: 0;
  background: #ff8c07;
  color: #000;
  font-family: Roboto, sans-serif;
  font-size: 38px;
  font-weight: 500;
  line-height: 50px;
  writing-mode: vertical-rl;
}

/* dialog */
.overlay {
  position: absolute;
  inset: 0;
  z-index: 2;
  padding: 184px 240px 186px;
}
.modal {
  display: flex;
  flex-direction: column;
  height: 100%;
  padding: 0 92px 60px 80px;
  background: #fff;
  box-shadow: 8px 8px 16px rgba(0, 0, 0, 0.36);
}
.modal h2 {
  margin: 36px 0 34px 8px;
  color: #6e6e6e;
  font-size: 57px;
  font-weight: 400;
  line-height: 80px;
}
.scroll {
  flex: 1;
  min-height: 0;
  margin-right: 18px;
  overflow: hidden;
  background: #ebebeb;
  color: #000;
}
.section-head {
  width: calc(100% - 152px);
  height: 80px;
  margin: 31px 0 10px 76px;
  padding: 0 39px 0 20px;
  justify-content: space-between;
  border: 2px solid #bdbdbd;
  background: #fff;
  color: #3b3a52;
  font-size: 25px;
  font-weight: 500;
}
.section-head svg {
  margin-bottom: 6px;
}
.row {
  display: flex;
  align-items: center;
  height: 68px;
}
.row.tall {
  height: 70px;
}
.label {
  flex: none;
  width: 496px;
  margin-right: 20px;
  text-align: right;
  font-weight: 500;
  color: #666;
}
.label i {
  margin-right: 10px;
  color: #ff9020;
  font-style: normal;
}
.disabled .label {
  color: #bfbfbf;
}
.disabled .switch {
  opacity: 0.1;
}
.field {
  display: flex;
  align-items: center;
  gap: 10px;
}
.radio {
  display: flex;
  align-items: center;
  gap: 8px;
  width: 200px;
}
.radio + .radio {
  margin-left: -10px;
}
.radio input {
  width: 30px;
  height: 30px;
  border: 2px solid #a3a3a3;
  border-radius: 50%;
  background: #fff;
  appearance: none;
}
.radio input:checked {
  background: radial-gradient(circle, #8f8f8f 0 9px, #fff 10px);
}
.text {
  width: 100px;
  height: 49px;
  padding: 2px 13px 0;
  border: 2px solid #c8c8c8;
  background: #fff;
  color: #000;
}
.text.short {
  width: 80px;
}
.sub {
  padding: 0 0 12px 516px;
}
.sub .field {
  gap: 8px;
}
.note {
  margin: 11px 0 39px 4px;
  color: #3f8f70;
  line-height: 34px;
}
.switch {
  position: relative;
  display: flex;
  flex-direction: row-reverse;
  align-items: center;
  justify-content: space-between;
  width: 88px;
  height: 37px;
  margin: 0 4px 0 1px;
  padding: 0 10px 0 6px;
  border-radius: 16px;
  background: #787878;
  color: #fff;
  font-family: Roboto, sans-serif;
  font-size: 20px;
}
.switch.on {
  flex-direction: row;
  width: 92px;
  height: 39px;
  margin: 0;
  padding: 0 6px 0 15px;
  background: #6b95c8;
}
.switch input {
  position: absolute;
  inset: 0;
  width: 100%;
  height: 100%;
  opacity: 0;
}
.switch i {
  width: 30px;
  height: 30px;
  border-radius: 50%;
  background: #fff;
  box-shadow: 0 2px 4px rgba(0, 0, 0, 0.3);
}
.actions {
  display: flex;
  justify-content: flex-end;
  gap: 13px;
  margin-top: 42px;
}
.actions button {
  width: 268px;
  height: 76px;
  padding-bottom: 2px;
  border: 0;
  font-size: 32px;
  font-weight: 500;
}
.ok {
  background: #404040;
  color: #fff;
}
.cancel {
  background: #a9a9a9;
  color: #404040;
}
</style>
